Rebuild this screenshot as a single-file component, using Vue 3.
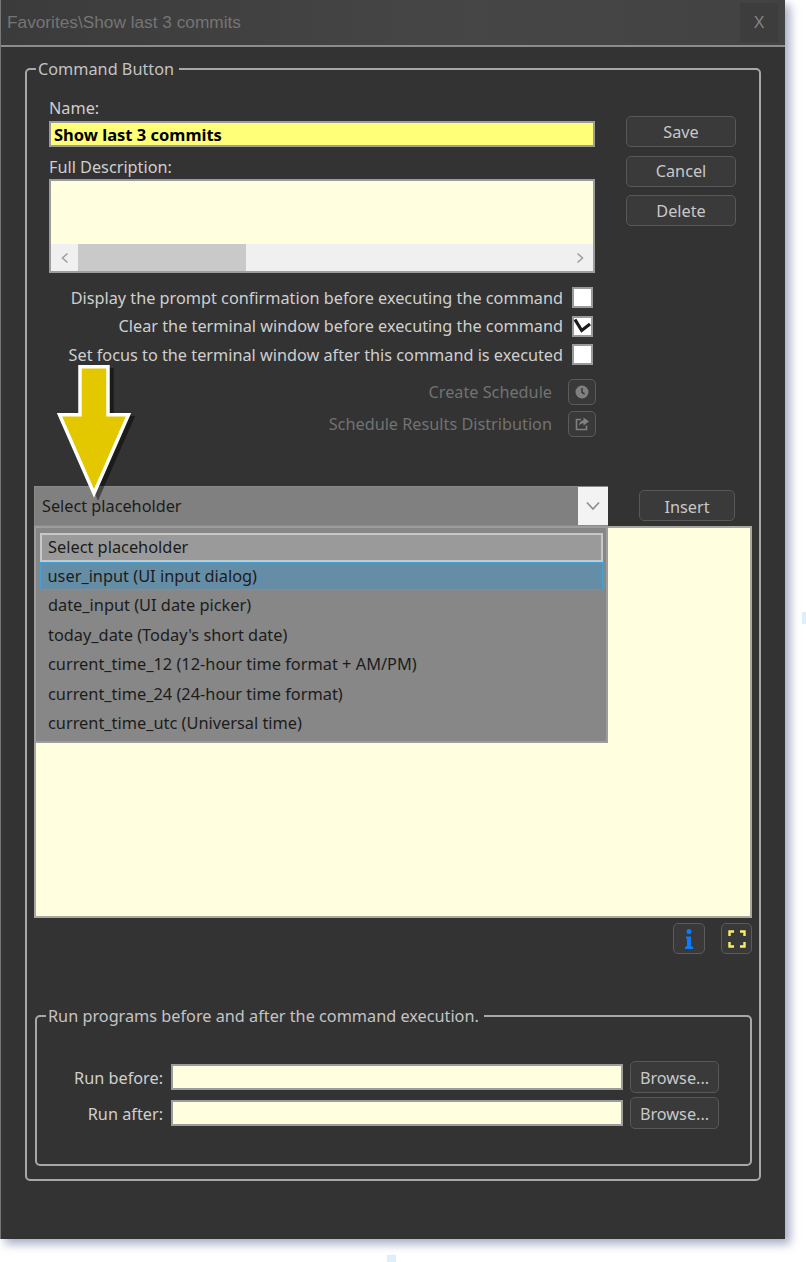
<script setup>
const options = [
  'user_input (UI input dialog)',
  'date_input (UI date picker)',
  "today_date (Today's short date)",
  'current_time_12 (12-hour time format + AM/PM)',
  'current_time_24 (24-hour time format)',
  'current_time_utc (Universal time)'
]
const checks = [
  { text: 'Display the prompt confirmation before executing the command', on: false },
  { text: 'Clear the terminal window before executing the command', on: true },
  { text: 'Set focus to the terminal window after this command is executed', on: false }
]
</script>

<template>
  <div class="page">
    <span class="speck speck-right"></span>
    <span class="speck speck-bottom"></span>
    <div class="window">
      <header class="titlebar">
        <span class="title">Favorites\Show last 3 commits</span>
        <span class="close">X</span>
      </header>
      <main class="body">
        <fieldset class="group outer">
          <legend>Command Button</legend>
          <div class="top">
            <div class="fields">
              <label class="lbl name-lbl">Name:</label>
              <div class="input name-input">Show last 3 commits</div>
              <label class="lbl desc-lbl">Full Description:</label>
              <div class="desc">
                <div class="desc-area"></div>
                <div class="hscroll">
                  <span class="sb-btn">
                    <svg width="10" height="14" viewBox="0 0 10 14"><path d="M7.5 2.5 2.5 7l5 4.5" fill="none" stroke="#a0a0a0" stroke-width="1.6" /></svg>
                  </span>
                  <span class="sb-thumb"></span>
                  <span class="sb-fill"></span>
                  <span class="sb-btn">
                    <svg width="10" height="14" viewBox="0 0 10 14"><path d="M2.5 2.5 7.5 7l-5 4.5" fill="none" stroke="#a0a0a0" stroke-width="1.6" /></svg>
                  </span>
                </div>
              </div>
              <div class="checks">
                <div v-for="c in checks" :key="c.text" class="check-row">
                  <span>{{ c.text }}</span>
                  <span class="box">
                    <svg v-if="c.on" width="17" height="17" viewBox="0 0 17 17"><path d="M1 1.500 7.700 12.500 16 6" fill="none" stroke="#1c1c1c" stroke-width="3.200" /></svg>
                  </span>
                </div>
              </div>
              <div class="sched-row first">
                <span>Create Schedule</span>
                <span class="icon-btn">
                  <svg width="16" height="16" viewBox="0 0 16 16"><circle cx="8" cy="8" r="6.5" fill="#808080" /><path d="M8 4v4.4l2.6 1.6" fill="none" stroke="#333" stroke-width="1.5" /></svg>
                </span>
              </div>
              <div class="sched-row">
                <span>Schedule Results Distribution</span>
                <span class="icon-btn">
                  <svg width="16" height="16" viewBox="0 0 16 16"><path d="M7 3.5H2.500v10h10V9.500" fill="none" stroke="#808080" stroke-width="1.6" /><path d="M9.500 1.500 15 5.500 9.500 9.500V7.300C7.500 7.300 6 8.200 5 10c0-3.400 1.800-5.600 4.500-5.800z" fill="#808080" /></svg>
                </span>
              </div>
            </div>
            <div class="actions">
              <button class="btn">Save</button>
              <button class="btn">Cancel</button>
              <button class="btn">Delete</button>
            </div>
          </div>

          <div class="editor">
            <div class="select-row">
              <div class="select">
                <span>Select placeholder</span>
                <span class="select-arrow">
                  <svg width="14" height="10" viewBox="0 0 14 10"><path d="M1 1.500 7 8l6-6.500" fill="none" stroke="#8f9199" stroke-width="1.800" /></svg>
                </span>
              </div>
              <button class="btn insert">Insert</button>
            </div>
            <div class="command-area"></div>
            <ul class="dropdown">
              <li class="opt current">Select placeholder</li>
              <li v-for="(o, i) in options" :key="o" class="opt" :class="{ hover: i === 0 }">{{ o }}</li>
            </ul>
            <svg class="arrow" width="82" height="140" viewBox="0 0 82 140">
              <path d="M25 2.750H53V50.750H73.500L39 129.500 4.500 50.750H25Z" fill="#000" stroke="#000" stroke-width="3.500" opacity=".45" transform="translate(4 3)" />
              <path d="M25 2.750H53V50.750H73.500L39 129.500 4.500 50.750H25Z" fill="#e3c800" stroke="#fff" stroke-width="3.500" />
            </svg>
          </div>

          <div class="tools">
            <span class="tool">
              <svg width="12" height="22" viewBox="0 0 12 22"><circle cx="6" cy="3.500" r="2.500" fill="#0a7cff" /><path d="M3 8.500h5v9.500l2 1v2H2v-2l2-1v-7l-1-.5z" fill="#0a7cff" /></svg>
            </span>
            <span class="tool">
              <svg width="18" height="18" viewBox="0 0 18 18"><path d="M1.500 6V1.500H6M12 1.500h4.500V6M16.500 12v4.500H12M6 16.500H1.500V12" fill="none" stroke="#f6f066" stroke-width="2.400" /></svg>
            </span>
          </div>

          <fieldset class="group inner">
            <legend>Run programs before and after the command execution.</legend>
            <div class="run-row">
              <label>Run before:</label>
              <div class="input run-input"></div>
              <button class="btn browse">Browse...</button>
            </div>
            <div class="run-row">
              <label>Run after:</label>
              <div class="input run-input"></div>
              <button class="btn browse">Browse...</button>
            </div>
          </fieldset>
        </fieldset>
      </main>
    </div>
  </div>
</template>

<style>
html, body { margin: 0; background: #fff; }
</style>

<style scoped>
* { box-sizing: border-box; }
.page {
  position: relative;
  width: 806px;
  height: 1262px;
  overflow: hidden;
  background: #fff;
  font-family: "Noto Sans", "Open Sans", sans-serif;
  font-size: 16.25px;
  color: #cfcfcf;
}
.speck { position: absolute; background: #dcefFb; }
.speck-right { left: 802px; top: 612px; width: 4px; height: 12px; }
.speck-bottom { left: 387px; top: 1255px; width: 9px; height: 7px; }
.window {
  width: 785px;
  height: 1239px;
  background: #333;
  border-left: 1px solid #777;
  box-shadow: 5px 5px 9px rgba(95, 105, 150, .55);
  position: relative;
}
.titlebar {
  height: 47px;
  display: flex;
  align-items: center;
  justify-content: space-between;
  padding: 0 7px 0 6px;
  background: linear-gradient(90deg, #3b3b3b, #464646 60%, #424242);
  border-bottom: 2px solid #8c8c8c;
}
.title { font-family: "Liberation Sans", Arial, sans-serif; font-size: 17.25px; color: #757575; }
.close {
  width: 38px;
  height: 39px;
  display: flex;
  align-items: center;
  justify-content: center;
  background: #3d3d3d;
  font-family: "Liberation Sans", Arial, sans-serif;
  font-size: 16px;
  color: #858585;
}
.body { padding: 11px 24px 0 24px; }
.group {
  margin: 0;
  border: 2px solid #a8a8a8;
  border-radius: 5px;
  min-width: 0;
}
.group legend { padding: 0 5px 0 2px; line-height: 22px; color: #c4c4c4; }
.outer { height: 1123px; padding: 0 7px 0 7px; }
.outer > legend { margin-left: 2px; }
.top { display: flex; padding: 19px 0 0 15px; }
.fields { width: 546px; }
.lbl { display: block; }
.name-lbl { height: 22px; line-height: 18px; }
.desc-lbl { margin-top: 9px; height: 23px; line-height: 22px; }
.input {
  background: #ffffdf;
  border: 2px solid #9c9c9c;
  color: #000;
}
.name-input {
  height: 26px;
  padding-left: 3px;
  background: #ffff78;
  font-weight: 700;
  font-size: 16.5px;
  line-height: 24px;
}
.desc { height: 94px; border: 2px solid #9c9c9c; display: flex; flex-direction: column; }
.desc-area { flex: 1; background: #ffffdf; }
.hscroll { height: 27px; background: #f0f0f0; display: flex; }
.sb-btn { width: 27px; display: flex; align-items: center; justify-content: center; }
.sb-thumb { width: 168px; background: #c9c9c9; }
.sb-fill { flex: 1; }
.checks { margin-top: 14px; display: flex; flex-direction: column; gap: 7.500px; }
.check-row {
  height: 21px;
  display: flex;
  justify-content: flex-end;
  align-items: center;
  gap: 9px;
  padding-right: 2px;
}
.box {
  width: 21px;
  height: 21px;
  background: #fff;
  border: 2px solid #9a9a9a;
  display: flex;
  align-items: center;
  justify-content: center;
}
.sched-row {
  height: 26px;
  margin: 6px -1px 0 0;
  display: flex;
  justify-content: flex-end;
  align-items: center;
  gap: 16px;
  color: #727272;
}
.sched-row.first { margin-top: 14px; }
.icon-btn {
  width: 28px;
  height: 26px;
  border: 1px solid #5b5b5b;
  border-radius: 5px;
  display: flex;
  align-items: center;
  justify-content: center;
  background: #393939;
}
.actions {
  margin: 17px 0 0 31px;
  width: 110px;
  display: flex;
  flex-direction: column;
  gap: 8.500px;
}
.btn {
  height: 31px;
  padding: 0;
  background: #3a3a3a;
  border: 1px solid #585858;
  border-radius: 5px;
  font: inherit;
  color: #c8c8c8;
}
.editor { position: relative; margin-top: 49px; }
.select-row { display: flex; align-items: center; gap: 31px; }
.select {
  width: 574px;
  height: 40px;
  display: flex;
  justify-content: space-between;
  align-items: center;
  padding: 0 0 0 7px;
  background: #808080;
  border: 1px solid #8a8a8a;
  border-right: 0;
  color: #1c1c1c;
}
.select-arrow {
  width: 30px;
  height: 38px;
  background: #f3f3f3;
  display: flex;
  align-items: center;
  justify-content: center;
}
.insert { width: 96px; margin-bottom: 2px; padding-top: 3px; }
.command-area {
  width: 718px;
  height: 392px;
  background: #ffffdf;
  border: 2px solid #a8a8a0;
}
.dropdown {
  position: absolute;
  left: 0;
  top: 40px;
  width: 574px;
  height: 217px;
  margin: 0;
  padding: 5px 3px 0 4px;
  list-style: none;
  background: #878787;
  border: 2px solid #9d9d9d;
  color: #1c1c1c;
  font-size: 16.35px;
}
.opt { height: 29.500px; line-height: 31px; padding-left: 8px; }
.opt.current { background: #9a9a9a; border: 2px solid #c8c8c8; line-height: 25px; padding-left: 6px; height: 29px; }
.opt.hover { background: #658ea6; border: 1.500px solid #3ea3d8; padding-left: 6.500px; height: 28px; line-height: 27px; }
.arrow { position: absolute; left: 21px; top: -122px; }
.tools { display: flex; justify-content: flex-end; gap: 16px; margin-top: 5px; width: 718px; }
.tool {
  width: 32px;
  height: 31px;
  border: 1px solid #5b5b5b;
  border-radius: 5px;
  display: flex;
  align-items: center;
  justify-content: center;
  background: #393939;
}
.tool + .tool { width: 31px; }
.inner { width: 717px; height: 161px; margin: 51px 0 0 1px; padding: 0; }
.inner > legend { margin-left: 9px; }
.run-row {
  display: flex;
  align-items: center;
  height: 32px;
  margin-top: 4px;
}
.inner > legend + .run-row { margin-top: 34px; }
.run-row label { width: 126px; text-align: right; padding-top: 2px; }
.run-input { width: 452px; height: 26px; margin-left: 8px; }
.browse { width: 89px; height: 32px; margin-left: 7px; padding-top: 2px; }
</style>
